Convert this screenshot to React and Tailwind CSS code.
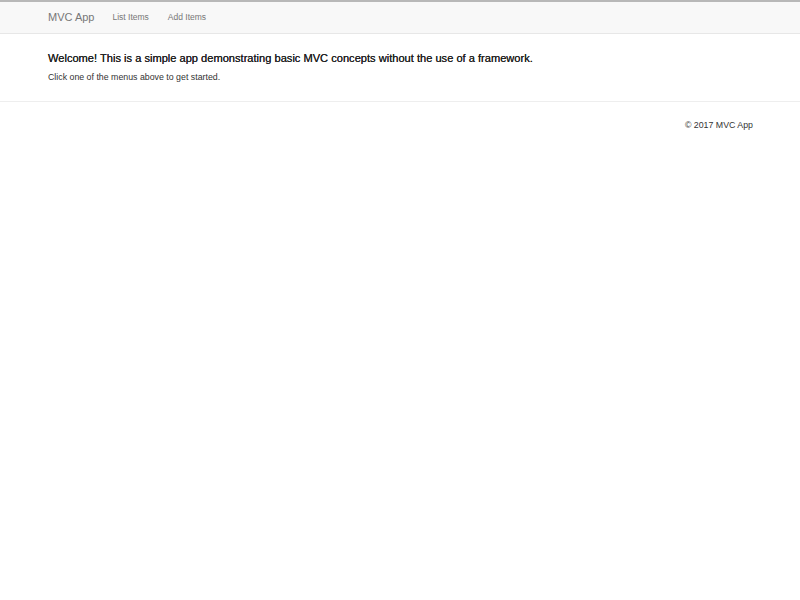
export default function App() {
  return (
    <div className="min-h-screen bg-white font-['Liberation_Sans',Arial,sans-serif] text-[#333]">
      {/* Navbar */}
      <nav className="h-[34px] border-t-2 border-b border-t-[#b8b8b8] border-b-[#e7e7e7] bg-[#f8f8f8]">
        <div className="flex h-full items-center pl-[48px]">
          <span className="text-[11px] text-[#777]">MVC App</span>
          <ul className="ml-[18px] flex items-center gap-[19px] text-[8.5px] text-[#777]">
            <li>List Items</li>
            <li>Add Items</li>
          </ul>
        </div>
      </nav>

      {/* Main */}
      <main className="px-[48px] pt-[17px]">
        <h4 className="text-[11.1px] leading-[14px] text-[#222] [text-shadow:0_0_0.3px_#222]">
          Welcome! This is a simple app demonstrating basic MVC concepts without the use of a framework.
        </h4>
        <p className="mt-[6px] text-[8.8px] leading-[12px] text-[#333]">
          Click one of the menus above to get started.
        </p>
      </main>

      <hr className="mt-[18px] border-t border-[#eee]" />

      {/* Footer */}
      <footer className="flex justify-end pr-[47px] pt-[17px]">
        <p className="text-[8.8px] text-[#333]">&copy; 2017 MVC App</p>
      </footer>
    </div>
  );
}
